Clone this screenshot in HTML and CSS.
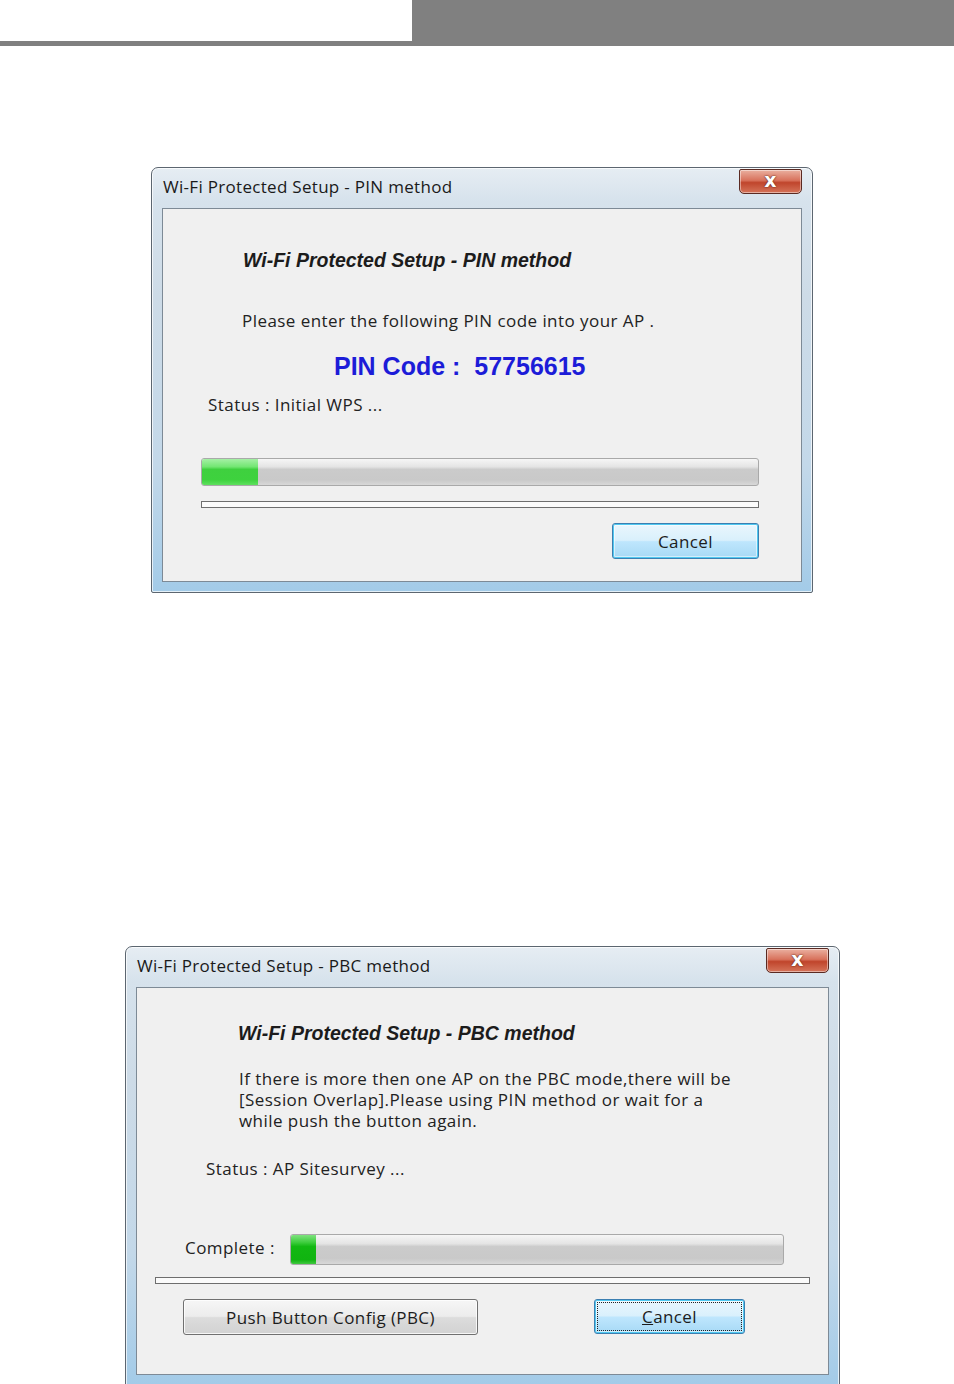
FILE: index.html
```html
<!DOCTYPE html>
<html>
<head>
<meta charset="utf-8">
<link rel="stylesheet" href="styles.css">
</head>
<body>
<div class="topbar"><div class="tb-left"></div><div class="tb-right"></div></div>

<div class="window win1">
  <div class="titlebar">
    <span class="title">Wi-Fi Protected Setup - PIN method</span>
    <div class="close"><span>x</span></div>
  </div>
  <div class="client c1">
    <div class="heading h1">Wi-Fi Protected Setup - PIN method</div>
    <div class="text p1">Please enter the following PIN code into your AP .</div>
    <div class="pin">PIN Code :&nbsp; 57756615</div>
    <div class="text status1">Status : Initial WPS ...</div>
    <div class="progress pg1"><div class="fill" style="width:10%"></div></div>
    <div class="sep sep1"></div>
    <div class="btnrow1"><div class="btn btn-default btn-c1">Cancel</div></div>
  </div>
</div>

<div class="window win2">
  <div class="titlebar">
    <span class="title">Wi-Fi Protected Setup - PBC method</span>
    <div class="close"><span>x</span></div>
  </div>
  <div class="client c2">
    <div class="heading h2">Wi-Fi Protected Setup - PBC method</div>
    <div class="text p2">If there is more then one AP on the PBC mode,there will be<br>[Session Overlap].Please using PIN method or wait for a<br>while push the button again.</div>
    <div class="text status2">Status : AP Sitesurvey ...</div>
    <div class="complete-row">
      <span class="text">Complete :</span>
      <div class="progress pg2"><div class="fill fill2" style="width:5%"></div></div>
    </div>
    <div class="sep sep2"></div>
    <div class="btnrow2">
      <div class="btn btn-pbc">Push Button Config (PBC)</div>
      <div class="btn btn-default btn-focus btn-c2"><u>C</u>ancel</div>
    </div>
  </div>
</div>
</body>
</html>
```

FILE: styles.css
```css
html, body { margin: 0; padding: 0; background: #fff; }
body { width: 954px; height: 1384px; overflow: hidden; font-family: "Open Sans", "Noto Sans", sans-serif; color: #222; }

.topbar { display: flex; height: 46px; }
.tb-left { width: 412px; height: 41px; border-bottom: 5px solid #808080; }
.tb-right { flex: 1; background: #808080; }

.window {
  box-sizing: border-box;
  border: 1px solid #5c6670;
  border-radius: 7px 7px 2px 2px;
  background: linear-gradient(180deg, #e6edf3 0%, #d6e2ec 8%, #cddbe7 30%, #c3d8e9 70%, #a3cbe8 100%);
  box-shadow: inset 0 0 0 1px rgba(255,255,255,0.7);
  display: flex; flex-direction: column;
}
.win1 { margin: 121px 0 0 151px; width: 662px; height: 426px; }
.win2 { margin: 353px 0 0 125px; width: 715px; height: 440px; }

.titlebar { height: 40px; display: flex; align-items: flex-start; justify-content: space-between; padding: 0 10px 0 11px; }
.title { font-size: 17px; line-height: 22px; color: #1a1a1a; margin-top: 8px; letter-spacing: 0.3px; }
.close {
  width: 61px; height: 23px; margin-top: 1px;
  border: 1px solid #5a2a22; border-radius: 2px 2px 5px 5px;
  background: linear-gradient(180deg, #eab0a0 0%, #d8725c 45%, #c0452c 55%, #d5745a 100%);
  box-shadow: inset 0 0 0 1px rgba(255,255,255,0.45);
  display: flex; align-items: center; justify-content: center;
}
.close span { color: #fff; font-family: "DejaVu Sans", sans-serif; font-weight: bold; font-size: 19px; line-height: 1; margin-top: -3px; text-shadow: 0 0 2px #6a2a1c, 0 0 1px #6a2a1c; }

.client {
  box-sizing: border-box;
  margin: 0 10px 10px 10px;
  flex: 1;
  background: #f0f0f0;
  border: 1px solid #7d8a96;
}

.text { font-size: 17px; line-height: 22px; letter-spacing: 0.45px; color: #222; white-space: nowrap; }
.heading { font-family: "Liberation Sans", Arial, sans-serif; font-weight: bold; font-style: italic; font-size: 19.5px; color: #1c1c1c; white-space: nowrap; }

.h1 { margin: 40px 0 0 80px; }
.p1 { margin: 38px 0 0 79px; }
.pin { margin: 20px 0 0 171px; font-family: "Liberation Sans", Arial, sans-serif; font-weight: bold; font-size: 25px; line-height: 29px; color: #1c1cd8; }
.status1 { margin: 13px 0 0 45px; }

.progress {
  box-sizing: border-box;
  height: 28px;
  border: 1px solid #a9a9a9;
  border-radius: 3px;
  background: linear-gradient(180deg, #f6f6f6 0%, #e4e4e4 30%, #cbcbcb 40%, #c9c9c9 80%, #d8d8d8 100%);
  overflow: hidden;
}
.fill { height: 100%; background: linear-gradient(180deg, #a5f0a5 0%, #73e673 30%, #3fd03f 40%, #3ed23e 80%, #5ee05e 100%); }
.fill2 { background: linear-gradient(180deg, #7fe27f 0%, #3fce3f 25%, #12b812 40%, #10b410 85%, #40c840 100%); }
.pg1 { margin: 42px 0 0 38px; width: 558px; }

.sep { box-sizing: border-box; height: 7px; border: 1px solid #6e6e6e; background: #fbfbfb; }
.sep1 { margin: 15px 0 0 38px; width: 558px; }

.btn {
  box-sizing: border-box;
  display: flex; align-items: center; justify-content: center;
  font-size: 17px; letter-spacing: 0.4px; color: #1c1c1c;
  border: 1px solid #707070; border-radius: 3px;
  background: linear-gradient(180deg, #f6f6f6 0%, #ececec 48%, #dcdcdc 52%, #d2d2d2 100%);
  box-shadow: inset 0 0 0 1px rgba(255,255,255,0.8);
}
.btn-default {
  border: 1px solid #3c7fb1;
  background: linear-gradient(180deg, #eaf6fd 0%, #d9f0fc 48%, #bee6fd 52%, #a7d9f5 100%);
  box-shadow: inset 0 0 0 1px #50c8f0, inset 0 0 0 2px rgba(255,255,255,0.5);
}
.btnrow1 { display: flex; justify-content: flex-end; margin: 15px 42px 0 0; }
.btn-c1 { width: 147px; height: 36px; }

.h2 { margin: 34px 0 0 101px; }
.p2 { margin: 23px 0 0 102px; line-height: 21px; }
.status2 { margin: 27px 0 0 69px; }
.complete-row { display: flex; align-items: center; margin: 54px 0 0 48px; gap: 15px; }
.complete-row .text { margin-top: -3px; }
.pg2 { width: 494px; height: 31px; }
.sep2 { margin: 12px 0 0 18px; width: 655px; }
.btnrow2 { display: flex; justify-content: space-between; margin: 15px 83px 0 46px; }
.btn-pbc { width: 295px; height: 36px; }
.btn-c2 { width: 151px; height: 35px; outline: 1px dotted #222; outline-offset: -4px; }
```
